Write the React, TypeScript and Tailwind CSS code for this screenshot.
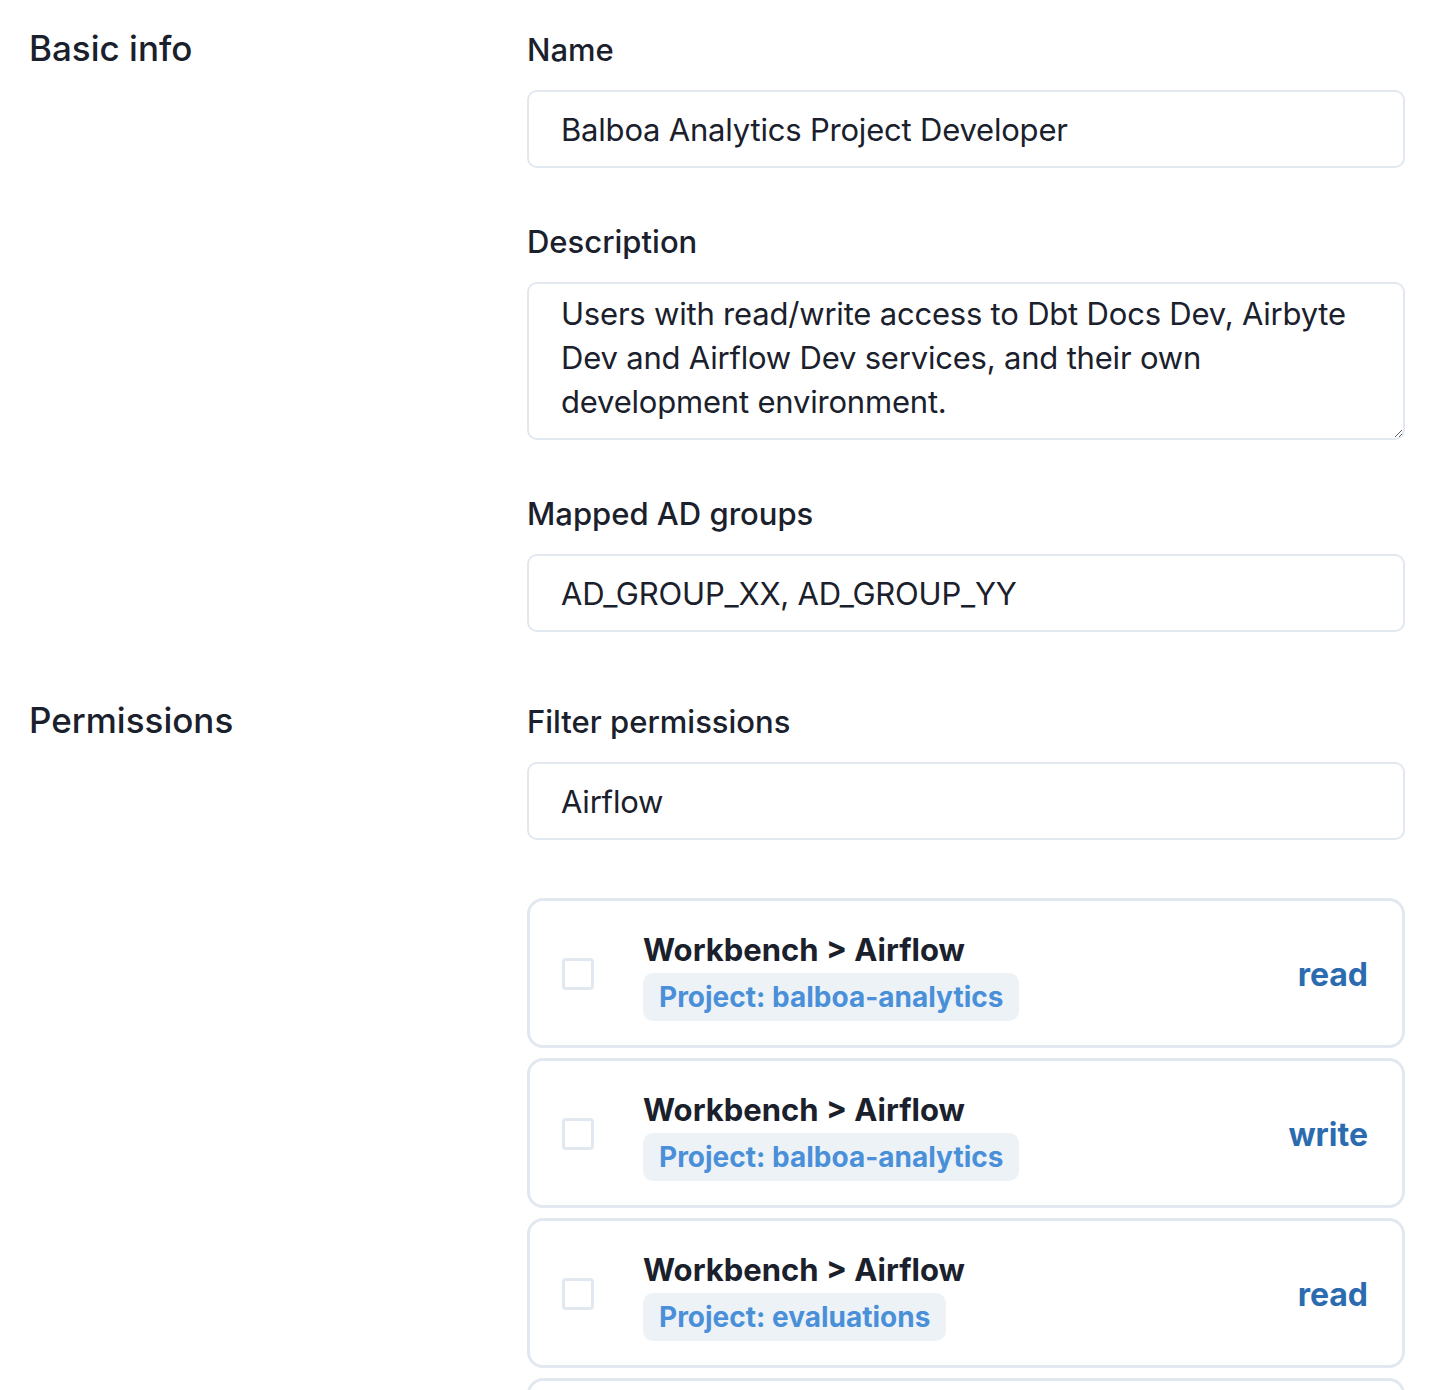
import React from 'react'

const font = { fontFamily: 'Inter, "Noto Sans", sans-serif' }

type Permission = {
  service: string
  scope: string
  access: 'read' | 'write'
}

const permissions: Permission[] = [
  { service: 'Workbench > Airflow', scope: 'Project: balboa-analytics', access: 'read' },
  { service: 'Workbench > Airflow', scope: 'Project: balboa-analytics', access: 'write' },
  { service: 'Workbench > Airflow', scope: 'Project: evaluations', access: 'read' },
  { service: 'Workbench > Airflow', scope: 'Project: evaluations', access: 'write' },
]

function Label({ children }: { children: React.ReactNode }) {
  return <label className="block text-[31px] leading-[40px] font-medium text-[#1a202c] mb-[20px]">{children}</label>
}

function TextInput({ value }: { value: string }) {
  return (
    <input
      defaultValue={value}
      className="block w-full h-[78px] rounded-[10px] border-2 border-[#e2e8f0] bg-white px-[32px] text-[31px] tracking-[-0.2px] text-[#1a202c] outline-none"
      style={font}
    />
  )
}

function PermissionCard({ permission }: { permission: Permission }) {
  return (
    <div className="flex items-center rounded-[16px] border-[3px] border-[#e2e8f0] bg-white pl-[32px] pr-[34px] pt-[27px] pb-[24px]">
      <input
        type="checkbox"
        className="appearance-none w-[32px] h-[32px] rounded-[4px] border-[3px] border-[#e2e8f0] bg-white shrink-0 -mt-[2px]"
      />
      <div className="ml-[49px] flex-1 flex flex-col items-start">
        <div className="text-[31px] leading-[44px] font-bold text-[#1a202c]">{permission.service}</div>
        <span className="mt-[1px] inline-block rounded-[10px] bg-[#edf2f7] px-[16px] text-[28px] leading-[48px] font-bold text-[#4a90d9]">
          {permission.scope}
        </span>
      </div>
      <span className="text-[32px] font-bold text-[#2b6cb0]">{permission.access}</span>
    </div>
  )
}

export default function App() {
  return (
    <div className="min-h-screen bg-white pl-[29px] pr-[25px] pt-[30px] text-[#1a202c]" style={font}>
      <section className="flex">
        <h2 className="w-[498px] shrink-0 text-[35px] leading-[36px] font-medium">Basic info</h2>
        <div className="flex-1">
          <Label>Name</Label>
          <TextInput value="Balboa Analytics Project Developer" />

          <div className="mt-[54px]">
            <Label>Description</Label>
            <textarea
              defaultValue="Users with read/write access to Dbt Docs Dev, Airbyte Dev and Airflow Dev services, and their own development environment."
              className="block w-full h-[158px] rounded-[10px] border-2 border-[#e2e8f0] bg-white px-[32px] pt-[8px] text-[31px] tracking-[-0.2px] leading-[44px] text-[#1a202c] outline-none"
              style={font}
            />
          </div>

          <div className="mt-[54px]">
            <Label>Mapped AD groups</Label>
            <TextInput value="AD_GROUP_XX, AD_GROUP_YY" />
          </div>
        </div>
      </section>

      <section className="flex mt-[70px]">
        <h2 className="w-[498px] shrink-0 text-[35px] leading-[36px] font-medium">Permissions</h2>
        <div className="flex-1">
          <Label>Filter permissions</Label>
          <TextInput value="Airflow" />

          <div className="mt-[58px] flex flex-col gap-[10px] pb-[40px]">
            {permissions.map((p, i) => (
              <PermissionCard key={i} permission={p} />
            ))}
          </div>
        </div>
      </section>
    </div>
  )
}
